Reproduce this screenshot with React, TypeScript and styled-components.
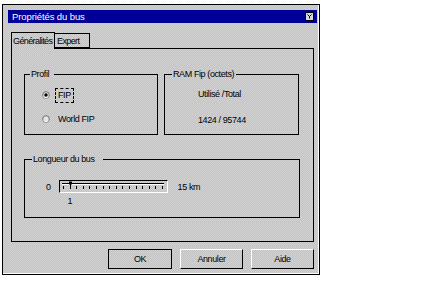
import styled, { createGlobalStyle } from "styled-components";

const colors = {
  face: '#cbcbcb',
  faceDark: '#c2c2c2',
  title: '#000099',
  line: '#000000',
  light: '#ffffff',
}

const dither = `
  background-color: ${colors.face};
  background-image: conic-gradient(${colors.faceDark} 25%, #d3d3d3 0 50%, ${colors.faceDark} 0 75%, #d3d3d3 0);
  background-size: 2px 2px;
`;

const GlobalStyle = createGlobalStyle`
  body {
    margin: 0;
    background: #ffffff;
    font-family: "Liberation Sans", Arial, sans-serif;
    font-size: 9px;
    letter-spacing: -0.4px;
    color: #000;
  }
`;

const Window = styled.div`
  margin: 4px 0 0 2px;
  width: 316px;
  height: 269px;
  border: 1px solid ${colors.line};
  box-shadow: inset -1px -1px 0 ${colors.light};
  ${dither}
`;

const TitleBar = styled.div`
  margin: 5px 2px 0 5px;
  height: 13px;
  background: ${colors.title};
  color: #ffffff;
  display: flex;
  align-items: center;
  justify-content: space-between;
  padding: 0 3px 0 4px;
  font-size: 9.5px;
  letter-spacing: -0.1px;
`;

const CloseBox = styled.div`
  width: 7px;
  height: 7px;
  border: 1px solid #000;
  background: #d8d8d8;
  display: flex;
`;

const Body = styled.div`
  padding: 8px 5px 0 8px;
  display: flex;
  flex-direction: column;
`;

const TabStrip = styled.div`
  display: flex;
  align-items: flex-end;
  height: 17px;
`;

const Tab = styled.div<{ $active?: boolean }>`
  height: ${p => p.$active ? 17 : 15}px;
  box-sizing: border-box;
  padding: 0 0 0 ${p => p.$active ? 1 : 2}px;
  letter-spacing: -0.6px;
  border: 1px solid ${colors.line};
  border-bottom: ${p => p.$active ? 'none' : `1px solid ${colors.line}`};
  border-left: ${p => p.$active ? `1px solid ${colors.line}` : 'none'};
  width: ${p => p.$active ? 44 : 35}px;
  display: flex;
  align-items: center;
  white-space: nowrap;
  position: relative;
  z-index: 1;
  margin-bottom: ${p => p.$active ? -1 : 0}px;
  ${dither}
`;

const Panel = styled.div`
  border: 1px solid ${colors.line};
  padding: 25px 0 0 12px;
  box-sizing: border-box;
  height: 194px;
  width: 303px;
  display: grid;
  grid-template-columns: 134px 135px;
  grid-template-rows: 61px 59px;
  column-gap: 6px;
  row-gap: 24px;
  align-content: start;
`;

const Group = styled.div<{ $wide?: boolean }>`
  position: relative;
  border: 1px solid ${colors.line};
  grid-column: ${p => p.$wide ? '1 / span 2' : 'auto'};
  width: ${p => p.$wide ? '276px' : 'auto'};
  box-sizing: border-box;
`;

const Caption = styled.span<{ $left: number; $right: number }>`
  position: absolute;
  top: -7px;
  left: ${p => p.$left}px;
  padding: 0 ${p => p.$right}px 0 1px;
  line-height: 12px;
  ${dither}
`;

const RadioList = styled.div`
  display: flex;
  flex-direction: column;
  padding: 13px 0 0 17px;
  gap: 10px;
`;

const RadioRow = styled.div`
  display: flex;
  align-items: center;
  height: 14px;
  gap: 5px;
`;

const RadioLabel = styled.span<{ $focus?: boolean }>`
  border: 1px dashed ${p => p.$focus ? colors.line : 'transparent'};
  padding: 1px 2px;
  line-height: 11px;
`;

const InfoColumn = styled.div`
  display: flex;
  flex-direction: column;
  padding: 13px 0 0 33px;
  gap: 14px;
  line-height: 12px;
`;

const SliderRow = styled.div`
  display: flex;
  align-items: center;
  padding: 20px 0 0 21px;
`;

const SliderEnd = styled.span<{ $gap: number }>`
  margin: 0 ${p => p.$gap}px;
  &:first-child { margin-left: 0; }
`;

const Track = styled.div`
  position: relative;
  width: 107px;
  height: 11px;
  border-top: 1px solid ${colors.line};
  border-left: 1px solid ${colors.line};
  border-bottom: 1px solid ${colors.light};
  border-right: 1px solid ${colors.light};
`;

const ValueLabel = styled.span`
  position: absolute;
  top: 15px;
  line-height: 10px;
`;

const ButtonRow = styled.div`
  display: flex;
  justify-content: flex-end;
  gap: 7px;
  margin-top: 7px;
  width: 303px;
`;

const Button = styled.button<{ $default?: boolean }>`
  ${dither}
  font: inherit;
  letter-spacing: inherit;
  color: #000;
  width: ${p => p.$default ? 64 : 63}px;
  height: 20px;
  box-sizing: border-box;
  border: 1px solid ${colors.line};
  border-top-color: ${p => p.$default ? colors.line : colors.light};
  border-left-color: ${p => p.$default ? colors.line : colors.light};
  padding: 0;
  & + & { margin-left: 1px; }
`;

const Radio = ({ checked }: { checked?: boolean }) => (
  <svg width="8" height="8" viewBox="0 0 8 8">
    <circle cx="4" cy="4" r="3.3" fill="#e6e6e6" stroke="#666666" strokeWidth="0.9" />
    <path d="M1.6 5.6 A3.3 3.3 0 0 0 6.4 5.6" stroke="#ffffff" strokeWidth="1" fill="none" />
    {checked && <circle cx="4" cy="4" r="1.7" fill="#000" />}
  </svg>
);

const SliderTicks = ({ value, max }: { value: number; max: number }) => {
  const step = 99 / max;
  const ticks = Array.from({ length: max + 1 }, (_, i) => 3 + i * step);
  const tx = 3 + value * step;
  return (
    <svg width="107" height="11" viewBox="0 0 107 11" style={{ display: 'block' }}>
      <line x1="2" y1="2.5" x2="104" y2="2.5" stroke="#000" />
      <line x1="2" y1="3.5" x2="104" y2="3.5" stroke="#fff" />
      {ticks.map((x, i) => (
        <line key={i} x1={Math.round(x) + 0.5} y1="5" x2={Math.round(x) + 0.5} y2="8" stroke="#000" />
      ))}
      <rect x={Math.round(tx) - 1} y="0.5" width="3" height="3" fill="#000" />
      <line x1={Math.round(tx) + 0.5} y1="3" x2={Math.round(tx) + 0.5} y2="6" stroke="#000" />
    </svg>
  );
};

export default function App() {
  const length = 1;
  const maxLength = 15;
  return (
    <>
      <GlobalStyle />
      <Window>
        <TitleBar>
          <span>Propriétés du bus</span>
          <CloseBox>
            <svg width="7" height="7" viewBox="0 0 7 7">
              <path d="M1.5 1.5 L3.5 3.5 M5.5 1.5 L3.5 3.5 L3.5 5.5" stroke="#000" strokeWidth="1" fill="none" />
            </svg>
          </CloseBox>
        </TitleBar>
        <Body>
          <TabStrip>
            <Tab $active>Généralités</Tab>
            <Tab>Expert</Tab>
          </TabStrip>
          <Panel>
            <Group>
              <Caption $left={5} $right={5}>Profil</Caption>
              <RadioList>
                <RadioRow>
                  <Radio checked />
                  <RadioLabel $focus>FIP</RadioLabel>
                </RadioRow>
                <RadioRow>
                  <Radio />
                  <RadioLabel>World FIP</RadioLabel>
                </RadioRow>
              </RadioList>
            </Group>
            <Group>
              <Caption $left={7} $right={2}>RAM Fip (octets)</Caption>
              <InfoColumn>
                <span>Utilisé /Total</span>
                <span>1424 / 95744</span>
              </InfoColumn>
            </Group>
            <Group $wide>
              <Caption $left={7} $right={8}>Longueur du bus</Caption>
              <SliderRow>
                <SliderEnd $gap={8}>0</SliderEnd>
                <Track>
                  <SliderTicks value={length} max={maxLength} />
                  <ValueLabel style={{ left: Math.round(3 + length * 99 / maxLength) - 2 }}>{length}</ValueLabel>
                </Track>
                <SliderEnd $gap={10}>15 km</SliderEnd>
              </SliderRow>
            </Group>
          </Panel>
          <ButtonRow>
            <Button $default>OK</Button>
            <Button>Annuler</Button>
            <Button>Aide</Button>
          </ButtonRow>
        </Body>
      </Window>
    </>
  );
}
